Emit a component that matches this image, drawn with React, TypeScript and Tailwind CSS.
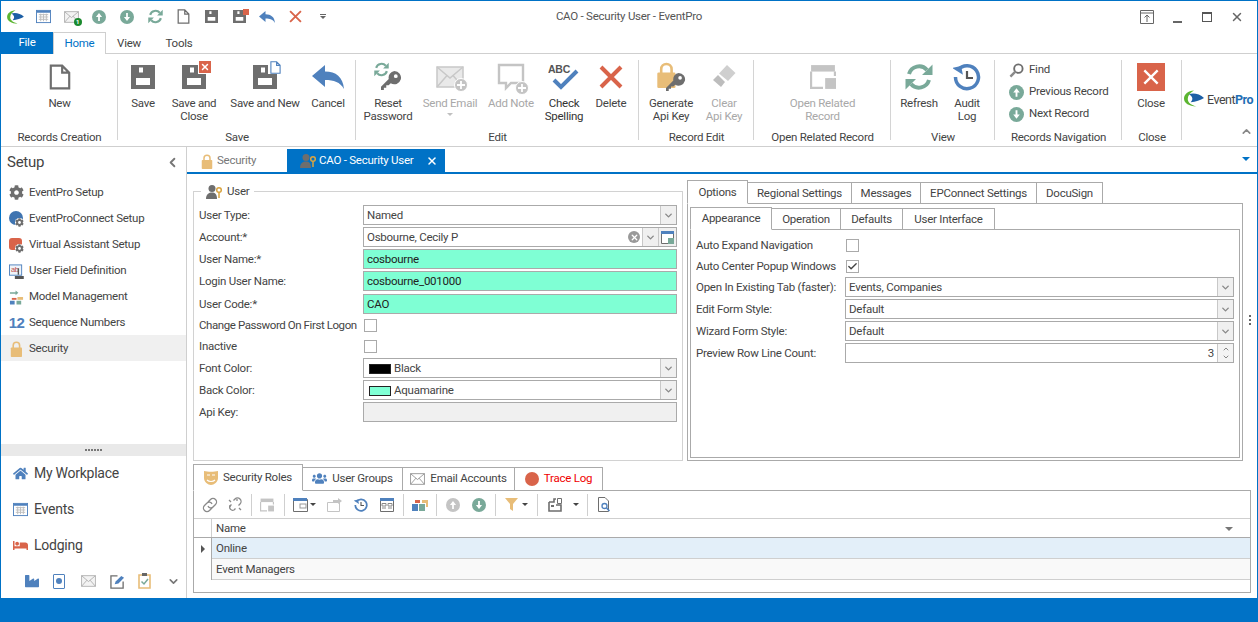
import type { ReactNode } from "react";
import { ChevronDown, ChevronLeft, ChevronUp, Check, X } from "lucide-react";
import { FaBed, FaCog, FaHome, FaIndustry, FaUsers } from "react-icons/fa";

const GRAY = "#6e6e6e";
const BLUE = "#4f81bd";
const RED = "#d9644a";
const GREEN = "#79a999";
const ORANGE = "#e8bd78";
const OFF = "#c4c4c4";

function Doc({ s = 24, c = GRAY }: { s?: number; c?: string }) {
  return (
    <svg width={s} height={s} viewBox="0 0 24 24">
      <path d="M3.500 1.500H14L20.500 8V22.500H3.500Z M14 1.500V8H20.500" fill="none" stroke={c} strokeWidth="2" />
    </svg>
  );
}

function Floppy({ s = 24, c = GRAY, badge }: { s?: number; c?: string; badge?: ReactNode }) {
  return (
    <span className="relative inline-flex">
      <svg width={s} height={s} viewBox="0 0 24 24">
        <path fillRule="evenodd" d="M0 0H24V24H0Z M8 2.500H12V7.500H8Z M5 13H19V20H5Z" fill={c} />
      </svg>
      {badge}
    </span>
  );
}

function Reply({ s = 32, c = BLUE }: { s?: number; c?: string }) {
  return (
    <svg width={s} height={s * 0.75} viewBox="0 0 32 24">
      <path d="M0 11L13 0V6.500C24 6.500 31 12 32 24C28 17 22 15 13 15V22Z" fill={c} />
    </svg>
  );
}

function XMark({ s = 24, c = RED, w = 4 }: { s?: number; c?: string; w?: number }) {
  return (
    <svg width={s} height={s} viewBox="0 0 24 24">
      <path d="M2 2L22 22M22 2L2 22" stroke={c} strokeWidth={w} />
    </svg>
  );
}

function Key({ s = 22, c = GRAY }: { s?: number; c?: string }) {
  return (
    <svg width={s} height={s} viewBox="0 0 22 22">
      <path
        fillRule="evenodd"
        d="M14 1a7 7 0 1 1-3.800 12.900L8 16H5.500v2.500H3V21H0v-3.500L8.100 9.400A7 7 0 0 1 14 1Z M15.500 4.500a2 2 0 1 0 0 4 2 2 0 0 0 0-4Z"
        fill={c}
      />
    </svg>
  );
}

function Refresh({ s = 28, c = GREEN }: { s?: number; c?: string }) {
  return (
    <svg width={s} height={s} viewBox="0 0 28 28">
      <path d="M4 11A10.500 10.500 0 0 1 22 7" fill="none" stroke={c} strokeWidth="4" />
      <path d="M24 17A10.500 10.500 0 0 1 6 21" fill="none" stroke={c} strokeWidth="4" />
      <path d="M27.500 1.500V12H17Z M0.500 26.500V16H11Z" fill={c} />
    </svg>
  );
}

function CircleArrow({ s = 16, c = GREEN, down }: { s?: number; c?: string; down?: boolean }) {
  return (
    <svg width={s} height={s} viewBox="0 0 16 16">
      <circle cx="8" cy="8" r="8" fill={c} />
      <path d={down ? "M7 3.500H9V8H11.500L8 12.500L4.500 8H7Z" : "M7 12.500H9V8H11.500L8 3.500L4.500 8H7Z"} fill="#fff" />
    </svg>
  );
}

function Envelope({ w = 28, h = 22, c = "#a8a8a8", fill = "#f3f3f3" }: { w?: number; h?: number; c?: string; fill?: string }) {
  return (
    <svg width={w} height={h} viewBox="0 0 28 22">
      <path d="M1 1H27V21H1Z" fill={fill} stroke={c} strokeWidth="1.500" />
      <path d="M1 1L14 12L27 1M1 21L11 9.500M27 21L17 9.500" fill="none" stroke={c} strokeWidth="1.500" />
    </svg>
  );
}

function PlusDot({ c = OFF }: { c?: string }) {
  return (
    <svg width="14" height="14" viewBox="0 0 14 14" className="absolute -right-1 -bottom-1">
      <circle cx="7" cy="7" r="6.500" fill={c} stroke="#fff" />
      <path d="M7 3V11M3 7H11" stroke="#fff" strokeWidth="1.800" />
    </svg>
  );
}

function Lock({ s = 18, c = ORANGE }: { s?: number; c?: string }) {
  return (
    <svg width={s * 0.8} height={s} viewBox="0 0 16 20">
      <path d="M4 9V5.500a4 4 0 0 1 8 0V9" fill="none" stroke={c} strokeWidth="2" />
      <rect x="1" y="8" width="14" height="12" rx="1" fill={c} />
    </svg>
  );
}

function WindowIcon({ s = 24, c = OFF }: { s?: number; c?: string }) {
  return (
    <svg width={s} height={s} viewBox="0 0 24 24">
      <path d="M1 1H23V7H1Z" fill={c} />
      <path d="M1 7V22H12M23 7V11" fill="none" stroke={c} strokeWidth="2" />
      <rect x="14" y="13" width="10" height="10" fill={c} />
    </svg>
  );
}

function HistoryClock({ s = 28 }: { s?: number }) {
  return (
    <svg width={s} height={s} viewBox="0 0 28 28">
      <path d="M5 7A11.500 11.500 0 1 1 2.500 14" fill="none" stroke={BLUE} strokeWidth="3.500" />
      <path d="M0 4H9V13Z" fill={BLUE} transform="rotate(-12 4 8)" />
      <path d="M14 8V15H20" fill="none" stroke="#555" strokeWidth="2.200" />
    </svg>
  );
}

function CalendarIcon({ s = 16 }: { s?: number }) {
  return (
    <svg width={s} height={s} viewBox="0 0 16 16">
      <rect x="0.500" y="1.500" width="15" height="13" fill="#fff" stroke={BLUE} />
      <path d="M1 2H15V4H1Z" fill={BLUE} />
      <path d="M3 6H13M3 8.500H13M3 11H13M5 5V13M8 5V13M11 5V13" stroke="#bdbdbd" />
    </svg>
  );
}

function Logo({ w = 16, h = 16 }: { w?: number; h?: number }) {
  return (
    <svg width={w} height={h} viewBox="0 0 24 20">
      <path d="M12 0.500C5 1 0 5 0 10C0 15.500 6 19.500 15 19.500C9 18 4.500 15 4.500 10.500C4.500 6.500 7.500 3 12 0.500Z" fill="#5cb531" />
      <path d="M6 5C11 3 19 4.500 24 9.500C20 12 14 14 8 14.500C11 11.500 11 8 6 5Z" fill="#1c5fa5" />
    </svg>
  );
}

function QuickBtn({ children }: { children: ReactNode }) {
  return <div className="flex h-5 w-7 items-center justify-center">{children}</div>;
}

function RibbonBtn({
  w,
  icon,
  label,
  off,
  caret,
}: {
  w: string;
  icon: ReactNode;
  label: ReactNode;
  off?: boolean;
  caret?: boolean;
}) {
  return (
    <div className={`flex shrink-0 flex-col items-center ${w}`}>
      <div className="flex h-[34px] w-full items-center justify-center">{icon}</div>
      <div className={`mt-[3px] text-center leading-[13px] ${off ? "text-[#a8a8a8]" : ""}`}>{label}</div>
      {caret && <div className="mt-[3px] h-0 w-0 border-x-[3px] border-t-[3px] border-x-transparent border-t-[#c0c0c0]" />}
    </div>
  );
}

function RibbonGroup({
  title,
  w,
  inner = "justify-center",
  children,
  last,
}: {
  title: string;
  w: string;
  inner?: string;
  children?: ReactNode;
  last?: boolean;
}) {
  return (
    <div className={`relative flex h-full shrink-0 flex-col ${w} ${last ? "" : "after:absolute after:top-[6px] after:right-0 after:h-[80px] after:w-px after:bg-[#d4d4d4]"}`}>
      <div className={`flex h-[75px] pt-[6px] ${inner}`}>{children}</div>
      <div className="mt-[1px] text-center leading-[14px]">{title}</div>
    </div>
  );
}

function Ribbon() {
  return (
    <div className="flex h-[93px] shrink-0 border-b border-[#cfcfcf]">
      <RibbonGroup title="Records Creation" w="w-[117px]">
        <RibbonBtn w="w-[60px]" icon={<Doc s={26} />} label="New" />
      </RibbonGroup>
      <RibbonGroup title="Save" w="w-[238px]" inner="justify-start pl-[6px]">
        <RibbonBtn w="w-[38px]" icon={<Floppy />} label="Save" />
        <RibbonBtn
          w="w-[64px]"
          icon={
            <Floppy
              badge={
                <span className="absolute -top-1 -right-[5px] flex size-3 items-center justify-center bg-[#d9644a] ring-1 ring-white">
                  <X size={10} color="#fff" strokeWidth={3.5} />
                </span>
              }
            />
          }
          label={<>Save and<br />Close</>}
        />
        <RibbonBtn
          w="w-[78px]"
          icon={
            <Floppy
              badge={
                <span className="absolute -top-1 -right-[5px] bg-white pl-px">
                  <Doc s={13} c={BLUE} />
                </span>
              }
            />
          }
          label="Save and New"
        />
        <RibbonBtn w="w-[48px]" icon={<Reply />} label="Cancel" />
      </RibbonGroup>
      <RibbonGroup title="Edit" w="w-[283px]" inner="justify-start pl-[1px]">
        <RibbonBtn
          w="w-[62px]"
          icon={
            <span className="relative flex h-7 w-7 items-end justify-end">
              <span className="absolute -top-[1px] left-0"><Refresh s={15} /></span>
              <Key s={21} />
            </span>
          }
          label={<>Reset<br />Password</>}
        />
        <RibbonBtn
          w="w-[62px]"
          off
          caret
          icon={
            <span className="relative inline-flex">
              <Envelope c="#c8c8c8" fill="#e9e9e9" />
              <PlusDot />
            </span>
          }
          label="Send Email"
        />
        <RibbonBtn
          w="w-[60px]"
          off
          icon={
            <span className="relative inline-flex">
              <svg width="28" height="28" viewBox="0 0 28 28">
                <path d="M2 2H26V20H14L9 25V20H2Z" fill="none" stroke={OFF} strokeWidth="2.400" />
              </svg>
              <PlusDot />
            </span>
          }
          label="Add Note"
        />
        <RibbonBtn
          w="w-[46px]"
          icon={
            <svg width="32" height="28" viewBox="0 0 32 28">
              <text x="0" y="10" fontFamily="'Liberation Sans',sans-serif" fontWeight="700" fontSize="10.500" fill="#555">ABC</text>
              <path d="M6 17L13 24L29 8" fill="none" stroke={BLUE} strokeWidth="4" />
            </svg>
          }
          label={<span className="text-[#333]">Check<br />Spelling</span>}
        />
        <RibbonBtn w="w-[48px]" icon={<XMark />} label="Delete" />
      </RibbonGroup>
      <RibbonGroup title="Record Edit" w="w-[115px]" inner="justify-start pl-[1px]">
        <RibbonBtn
          w="w-[62px]"
          icon={
            <span className="relative flex h-[30px] w-[30px]">
              <Lock s={26} />
              <span className="absolute right-0 bottom-0"><Key s={20} /></span>
            </span>
          }
          label={<>Generate<br />Api Key</>}
        />
        <RibbonBtn
          w="w-[44px]"
          off
          icon={
            <svg width="24" height="26" viewBox="0 0 24 26">
              <path d="M15 1L23.500 9L16 17L7 9.500Z" fill="#cfcfcf" />
              <path d="M6 11L13 18L9 23L1 16Z" fill="#bdbdbd" />
            </svg>
          }
          label={<>Clear<br />Api Key</>}
        />
      </RibbonGroup>
      <RibbonGroup title="Open Related Record" w="w-[137px]">
        <RibbonBtn w="w-[100px]" off icon={<WindowIcon s={26} />} label={<>Open Related<br />Record</>} />
      </RibbonGroup>
      <RibbonGroup title="View" w="w-[104px]" inner="justify-start pl-[2px]">
        <RibbonBtn w="w-[52px]" icon={<Refresh />} label="Refresh" />
        <RibbonBtn w="w-[44px]" icon={<HistoryClock />} label={<>Audit<br />Log</>} />
      </RibbonGroup>
      <RibbonGroup title="Records Navigation" w="w-[127px]">
        <div className="flex w-full flex-col gap-[6px] pt-[2px] pl-[14px]">
          <div className="flex h-4 items-center gap-[5px]">
            <svg width="15" height="15" viewBox="0 0 16 16">
              <circle cx="10" cy="6" r="4.500" fill="none" stroke={GRAY} strokeWidth="2" />
              <path d="M7 9L1.500 14.500" stroke="#8a8a8a" strokeWidth="2.600" />
            </svg>
            Find
          </div>
          <div className="flex h-4 items-center gap-[5px]"><CircleArrow s={15} />Previous Record</div>
          <div className="flex h-4 items-center gap-[5px]"><CircleArrow s={15} down />Next Record</div>
        </div>
      </RibbonGroup>
      <RibbonGroup title="Close" w="w-[60px]" inner="justify-center pr-[2px]">
        <RibbonBtn
          w="w-[56px]"
          icon={
            <span className="flex size-7 items-center justify-center bg-[#d9644a]">
              <XMark s={16} c="#fff" w={3.5} />
            </span>
          }
          label="Close"
        />
      </RibbonGroup>
      <RibbonGroup title="" w="w-[75px]" inner="justify-start pl-[2px]" last>
        <div className="flex h-[47px] items-end gap-[3px]">
          <Logo w={20} h={17} />
          <span className="text-[12.500px] leading-[15px] tracking-[-0.5px] text-[#444]">
            Event<span className="font-bold text-[#1f6fb5]">Pro</span>
          </span>
        </div>
        <ChevronUp size={13} strokeWidth={3} className="absolute right-[4px] bottom-[8px] text-[#888]" />
      </RibbonGroup>
    </div>
  );
}

const SETUP: [string, ReactNode][] = [
  ["EventPro Setup", <FaCog size={15} color={GRAY} />],
  [
    "EventProConnect Setup",
    <span className="relative flex size-4">
      <span className="size-[14px] rounded-full bg-[#3f74b0]" />
      <FaCog size={9} color={GRAY} className="absolute right-0 bottom-0 rounded-full bg-white" />
    </span>,
  ],
  [
    "Virtual Assistant Setup",
    <span className="relative flex size-4">
      <span className="mt-px h-3 w-[13px] rounded-[3px] bg-[#d9644a]" />
      <FaCog size={9} color={GRAY} className="absolute right-0 bottom-0 rounded-full bg-white" />
    </span>,
  ],
  [
    "User Field Definition",
    <svg width="16" height="16" viewBox="0 0 16 16">
      <rect x="0.500" y="1.500" width="13" height="11" fill="#eef3f9" stroke={BLUE} />
      <text x="2" y="9.500" fontSize="8" fontFamily="'Liberation Sans',sans-serif" fill="#c0504d">ab</text>
      <path d="M10 5V12M7 14H15V16H7Z" stroke="#555" fill="#555" strokeWidth="1.500" />
    </svg>,
  ],
  [
    "Model Management",
    <svg width="16" height="16" viewBox="0 0 16 16">
      <path d="M1 3H7V1L10 3.500L7 6V4.500H1Z" fill={GREEN} />
      <path d="M9 8H15V11H9Z" fill={ORANGE} />
      <path d="M3 9H8V11H3Z" fill={RED} />
      <path d="M1 12H6V16H1Z" fill={BLUE} />
      <path d="M8 12H13V16H8Z" fill={GREEN} />
    </svg>,
  ],
  ["Sequence Numbers", <span className="[font-family:'Liberation_Sans',sans-serif] text-[15px] leading-none font-bold tracking-[-0.5px] text-[#4f81bd]">12</span>],
  ["Security", <Lock s={16} />],
];

function Sidebar() {
  return (
    <aside className="flex w-[186px] shrink-0 flex-col border-r border-[#cfcfcf]">
      <div className="flex h-[32px] shrink-0 items-center justify-between px-[6px] pb-px">
        <span className="text-[15px]">Setup</span>
        <ChevronLeft size={15} strokeWidth={3} className="text-[#777]" />
      </div>
      <div className="flex flex-1 flex-col">
        {SETUP.map(([label, icon], i) => (
          <div key={label} className={`flex h-[26px] items-center gap-[5px] pt-px pl-[8px] ${i === 6 ? "bg-[#f0f0f0]" : ""}`}>
            <span className="flex w-[15px] justify-center">{icon}</span>
            {label}
          </div>
        ))}
      </div>
      <div className="flex h-[12px] shrink-0 items-center justify-center gap-[1px] bg-[#e9e9e9]">
        {[0, 1, 2, 3, 4, 5].map((n) => (
          <span key={n} className="size-[2px] bg-[#777]" />
        ))}
      </div>
      <div className="flex h-[36px] items-center gap-[6px] pb-px pl-[12px] text-[14px]">
        <FaHome size={15} color={BLUE} />My Workplace
      </div>
      <div className="flex h-[36px] items-center gap-[6px] pb-px pl-[12px] text-[14px]">
        <CalendarIcon s={15} />Events
      </div>
      <div className="flex h-[36px] items-center gap-[6px] pb-px pl-[12px] text-[14px]">
        <FaBed size={15} color={RED} />Lodging
      </div>
      <div className="flex h-[34px] items-center pl-[24px]">
        <span className="flex w-[28px]"><FaIndustry size={14} color={BLUE} /></span>
        <span className="flex w-[28px]">
          <span className="flex h-[15px] w-[12px] items-center justify-center rounded-[1px] border border-[#4f81bd]">
            <span className="size-[6px] rounded-full bg-[#4f81bd]" />
          </span>
        </span>
        <span className="flex w-[29px]"><Envelope w={15} h={12} /></span>
        <span className="flex w-[28px]">
          <svg width="15" height="15" viewBox="0 0 16 16">
            <path d="M8 2H1V15H14V8" fill="none" stroke={GRAY} strokeWidth="1.400" />
            <path d="M5 11L6 8L12 2L15 4L9 10Z" fill={BLUE} />
          </svg>
        </span>
        <span className="flex w-[29px]">
          <svg width="13" height="16" viewBox="0 0 13 16">
            <path d="M1 2H12V15H1Z" fill="#fff" stroke={ORANGE} strokeWidth="1.600" />
            <rect x="4" y="0" width="5" height="3" fill="#666" />
            <path d="M3.500 8.500L6 11L10 6" fill="none" stroke={GREEN} strokeWidth="1.500" />
          </svg>
        </span>
        <ChevronDown size={13} strokeWidth={3} className="text-[#777]" />
      </div>
    </aside>
  );
}

function Tab({ cls, active, children }: { cls: string; active?: boolean; children: ReactNode }) {
  return (
    <div className={`-mb-px flex shrink-0 items-center justify-center gap-[5px] border border-[#aaaaaa] bg-white ${cls} ${active ? "z-10 border-b-white" : "border-l-0"}`}>
      {children}
    </div>
  );
}

function Caret() {
  return (
    <span className="flex h-full w-[16px] items-center justify-center border-l border-[#c8c8c8] bg-[#f0f0f0]">
      <ChevronDown size={11} strokeWidth={3} className="text-[#888]" />
    </span>
  );
}

function Select({ children }: { children: ReactNode }) {
  return (
    <div className="flex h-5 items-center border border-[#aaaaaa] bg-white">
      <div className="flex min-w-0 flex-1 items-center gap-[3px] pt-px pl-[3px]">{children}</div>
      <Caret />
    </div>
  );
}

function TextBox({ children }: { children: ReactNode }) {
  return <div className="flex h-5 items-center border border-[#aaaaaa] bg-[#7fffd4] pt-px pl-[3px] text-[#222]">{children}</div>;
}

function Box({ checked }: { checked?: boolean }) {
  return (
    <span className="flex size-[13px] items-center justify-center border border-[#aaaaaa] bg-white">
      {checked && <Check size={11} strokeWidth={3} className="text-[#444]" />}
    </span>
  );
}

function Row({ label, children, cls = "h-5 mb-[2px]", col }: { label: ReactNode; children: ReactNode; cls?: string; col: string }) {
  return (
    <div className={`flex items-center ${cls}`}>
      <div className={`shrink-0 whitespace-nowrap pt-px ${col}`}>{label}</div>
      <div className="min-w-0 flex-1">{children}</div>
    </div>
  );
}

function UserKey() {
  return (
    <svg width="17" height="14" viewBox="0 0 17 14">
      <circle cx="6" cy="3.500" r="3.500" fill={GRAY} />
      <path d="M0 14C0 9 3 7.500 6 7.500C9 7.500 11 9 11 14Z" fill={GRAY} />
      <circle cx="13" cy="5" r="2.300" fill="none" stroke="#d9a441" strokeWidth="1.500" />
      <path d="M13 7V13" stroke="#d9a441" strokeWidth="1.500" />
    </svg>
  );
}

const LEFT = "w-[164px]";
const RIGHT = "w-[149px]";

function UserForm() {
  return (
    <div className="flex w-[496px] shrink-0 flex-col pt-[17px] pl-[6px]">
      <div className="relative flex-1 border border-[#d2d2d2] px-[5px] pt-[13px]">
        <div className="absolute -top-[9px] left-[7px] flex items-center gap-[4px] bg-white px-[5px]">
          <UserKey />User
        </div>
        <Row col={LEFT} label="User Type:">
          <Select>Named</Select>
        </Row>
        <Row col={LEFT} label="Account:*">
          <div className="flex h-5 items-center border border-[#aaaaaa] bg-white">
            <div className="flex-1 pt-px pl-[3px]">Osbourne, Cecily P</div>
            <span className="mr-[2px] flex size-3 items-center justify-center rounded-full bg-[#999]">
              <X size={9} color="#fff" strokeWidth={3.5} />
            </span>
            <Caret />
            <span className="flex h-full w-[18px] items-center justify-center border-l border-[#c8c8c8] bg-[#f0f0f0]">
              <svg width="13" height="13" viewBox="0 0 13 13">
                <path d="M0.500 0.500H12.500V12.500H0.500Z" fill="#fff" stroke={GRAY} />
                <path d="M0 0H13V3H0Z" fill={BLUE} />
                <rect x="7" y="7" width="6" height="6" fill={GREEN} />
              </svg>
            </span>
          </div>
        </Row>
        <Row col={LEFT} label="User Name:*">
          <TextBox>cosbourne</TextBox>
        </Row>
        <Row col={LEFT} label="Login User Name:" cls="h-5 mb-[3px]">
          <TextBox>cosbourne_001000</TextBox>
        </Row>
        <Row col={LEFT} label="User Code:*">
          <TextBox>CAO</TextBox>
        </Row>
        <Row col={LEFT} label={<span className="tracking-[-0.42px]">Change Password On First Logon</span>} cls="h-[19px] mb-[2px]">
          <span className="block pl-[1px]"><Box /></span>
        </Row>
        <Row col={LEFT} label="Inactive" cls="h-[19px] mb-[2px]">
          <span className="block pl-[1px]"><Box /></span>
        </Row>
        <Row col={LEFT} label="Font Color:">
          <Select>
            <span className="ml-[2px] h-[10px] w-[22px] border border-[#222] bg-black" />Black
          </Select>
        </Row>
        <Row col={LEFT} label="Back Color:">
          <Select>
            <span className="ml-[2px] h-[10px] w-[22px] border border-[#222] bg-[#7fffd4]" />Aquamarine
          </Select>
        </Row>
        <Row col={LEFT} label="Api Key:">
          <div className="h-5 border border-[#aaaaaa] bg-[#f0f0f0]" />
        </Row>
      </div>
    </div>
  );
}

function OptionsPanel() {
  return (
    <div className="flex w-[560px] shrink-0 flex-col pt-[6px] pl-[4px]">
      <div className="flex items-end">
        <Tab cls="w-[61px] h-[24px] pt-px" active>Options</Tab>
        <Tab cls="w-[104px] h-[22px] pt-px">Regional Settings</Tab>
        <Tab cls="w-[69px] h-[22px] pt-px">Messages</Tab>
        <Tab cls="w-[116px] h-[22px] pt-px">EPConnect Settings</Tab>
        <Tab cls="w-[66px] h-[22px] pt-px">DocuSign</Tab>
      </div>
      <div className="flex flex-1 flex-col border border-[#aaaaaa] px-[2px] pt-[3px] pb-[2px]">
        <div className="flex items-end">
          <Tab cls="w-[82px] h-[23px] pt-px" active>Appearance</Tab>
          <Tab cls="w-[69px] h-[22px] pt-px">Operation</Tab>
          <Tab cls="w-[62px] h-[22px] pt-px">Defaults</Tab>
          <Tab cls="w-[92px] h-[22px] pt-px">User Interface</Tab>
        </div>
        <div className="flex-1 border border-[#aaaaaa] px-[5px] pt-[6px]">
          <Row col={RIGHT} label="Auto Expand Navigation" cls="h-[19px] mb-[2px]">
            <span className="block pl-[1px]"><Box /></span>
          </Row>
          <Row col={RIGHT} label="Auto Center Popup Windows" cls="h-[19px] mb-[1px]">
            <span className="block pl-[1px]"><Box checked /></span>
          </Row>
          <Row col={RIGHT} label="Open In Existing Tab (faster):">
            <Select>Events, Companies</Select>
          </Row>
          <Row col={RIGHT} label="Edit Form Style:">
            <Select>Default</Select>
          </Row>
          <Row col={RIGHT} label="Wizard Form Style:">
            <Select>Default</Select>
          </Row>
          <Row col={RIGHT} label="Preview Row Line Count:">
            <div className="flex h-5 items-center justify-end border border-[#aaaaaa] bg-white">
              <span className="pt-px pr-[3px]">3</span>
              <span className="flex h-full w-[16px] flex-col items-center justify-center border-l border-[#c8c8c8] bg-[#f4f4f4] text-[#888]">
                <ChevronUp size={8} strokeWidth={3} />
                <ChevronDown size={8} strokeWidth={3} />
              </span>
            </div>
          </Row>
        </div>
      </div>
    </div>
  );
}

function Sep({ ml }: { ml: string }) {
  return <span className={`h-[22px] w-px shrink-0 bg-[#cfcfcf] ${ml}`} />;
}

function Arrow({ ml }: { ml: string }) {
  return <span className={`h-0 w-0 shrink-0 border-x-[3px] border-t-[3px] border-x-transparent border-t-[#444] ${ml}`} />;
}

function Link({ broken }: { broken?: boolean }) {
  return (
    <svg width="16" height="16" viewBox="0 0 16 16">
      <g fill="none" stroke="#8a8a8a" strokeWidth="1.300">
        {broken ? (
          <path d="M6.500 3.500L8 2a3 3 0 0 1 5 5L11.500 8.500M4.500 7.500L3 9a3 3 0 0 0 4 4L8.500 11.500M2 3L4 5M12 11L14 13M10 2V4M2 9H4" />
        ) : (
          <path d="M6 5L8.500 2.500a3 3 0 0 1 5 5L11 10a3 3 0 0 1-5-1M10 11L7.500 13.500a3 3 0 0 1-5-5L5 6a3 3 0 0 1 5 1" />
        )}
      </g>
    </svg>
  );
}

function Toolbar() {
  return (
    <div className="flex h-[28px] items-center border-b border-[#cfcfcf]">
      <span className="ml-[8px] flex"><Link /></span>
      <span className="ml-[9px] flex"><Link broken /></span>
      <Sep ml="ml-[8px]" />
      <span className="ml-[8px] flex"><WindowIcon s={14} /></span>
      <Sep ml="ml-[10px]" />
      <span className="ml-[8px] flex">
        <svg width="15" height="14" viewBox="0 0 15 14">
          <path d="M0.500 1.500H14.500V13.500H0.500Z" fill="#fff" stroke={GRAY} />
          <path d="M0 0H14V3H0Z" fill={BLUE} />
          <rect x="7" y="6" width="6" height="4" fill="none" stroke="#999" />
        </svg>
      </span>
      <Arrow ml="ml-[2px]" />
      <span className="ml-[11px] flex">
        <svg width="15" height="14" viewBox="0 0 15 14">
          <path d="M0.500 4.500H12.500V13.500H0.500Z" fill="#fff" stroke={OFF} />
          <path d="M6 5V2H11V0L15 3L11 6V4" fill={OFF} />
        </svg>
      </span>
      <span className="ml-[12px] flex"><HistoryClock s={14} /></span>
      <span className="ml-[12px] flex">
        <svg width="14" height="14" viewBox="0 0 14 14">
          <path d="M0.500 0.500H13.500V13.500H0.500Z" fill="#fff" stroke={GRAY} />
          <path d="M0 0H14V3H0Z" fill={BLUE} />
          <path d="M2 5.500H6V8H2ZM8 5.500H12V8H8ZM2 10H6M8 10H12" fill="none" stroke="#888" />
        </svg>
      </span>
      <Sep ml="ml-[9px]" />
      <span className="ml-[8px] flex">
        <svg width="16" height="12" viewBox="0 0 16 12">
          <path d="M3 1H8V4H3Z" fill={RED} />
          <path d="M10 1H16V8H14V4H10Z" fill={ORANGE} />
          <path d="M0 5H6V12H0Z" fill={BLUE} />
          <path d="M7 5H13V12H7Z" fill={GREEN} />
        </svg>
      </span>
      <Sep ml="ml-[8px]" />
      <span className="ml-[9px] flex"><CircleArrow s={14} c={OFF} /></span>
      <span className="ml-[12px] flex"><CircleArrow s={14} down /></span>
      <Sep ml="ml-[9px]" />
      <span className="ml-[9px] flex">
        <svg width="13" height="13" viewBox="0 0 13 13">
          <path d="M0 0H13L8 6V13L5 11V6Z" fill={ORANGE} />
        </svg>
      </span>
      <Arrow ml="ml-[4px]" />
      <Sep ml="ml-[9px]" />
      <span className="ml-[10px] flex">
        <svg width="14" height="14" viewBox="0 0 14 14">
          <path d="M1 4H6V1H8M1 4V13H13V7H8" fill="none" stroke={GRAY} strokeWidth="1.600" />
          <path d="M9.500 0.500H13.500V5.500H9.500Z" fill="#fff" stroke={GRAY} />
          <path d="M3 7H6V9H3Z" fill={GRAY} />
        </svg>
      </span>
      <Arrow ml="ml-[11px]" />
      <Sep ml="ml-[8px]" />
      <span className="ml-[9px] flex">
        <svg width="14" height="15" viewBox="0 0 14 15">
          <path d="M1.500 0.500H8L11.500 4V14.500H1.500Z" fill="#fff" stroke={GRAY} />
          <circle cx="7.500" cy="9" r="2.500" fill="none" stroke={BLUE} strokeWidth="1.300" />
          <path d="M9.500 11L12.500 14" stroke={BLUE} strokeWidth="1.500" />
        </svg>
      </span>
    </div>
  );
}

function BottomPanel() {
  return (
    <div className="flex flex-col px-[6px] pt-[3px] pb-[5px]">
      <div className="flex items-end">
        <Tab cls="w-[110px] h-[27px]" active>
          <svg width="14" height="15" viewBox="0 0 14 15">
            <path d="M0 1C4 2 10 2 14 1V8C14 12 10 15 7 15C4 15 0 12 0 8Z" fill={ORANGE} />
            <path d="M3 10C5 12 9 12 11 10M3 5H6M8 5H11" fill="none" stroke="#fff" strokeWidth="1.200" />
          </svg>
          Security Roles
        </Tab>
        <Tab cls="w-[100px] h-[24px] pb-px"><FaUsers size={15} color={BLUE} />User Groups</Tab>
        <Tab cls="w-[112px] h-[24px] pb-px"><Envelope w={15} h={12} c="#888" fill="#fff" />Email Accounts</Tab>
        <Tab cls="w-[88px] h-[24px] pb-px"><span className="size-[14px] rounded-full bg-[#d9644a]" /><span className="text-[#f00000]">Trace Log</span></Tab>
      </div>
      <div className="h-[103px] border border-[#aaaaaa]">
        <Toolbar />
        <div className="flex h-[19px] border-b border-[#aaaaaa]">
          <div className="w-[18px] border-r border-[#cfcfcf]" />
          <div className="flex flex-1 items-center justify-between pt-px pr-[17px] pl-[4px]">
            Name
            <span className="h-0 w-0 border-x-[4px] border-t-[4px] border-x-transparent border-t-[#777]" />
          </div>
        </div>
        <div className="flex h-[21px]">
          <div className="flex w-[18px] items-center justify-center border-r border-[#aaaaaa]">
            <span className="h-0 w-0 border-y-[4px] border-l-[4px] border-y-transparent border-l-[#555]" />
          </div>
          <div className="flex flex-1 items-center border-b border-[#cfcfcf] bg-[#e3eff9] pt-px pl-[4px]">Online</div>
        </div>
        <div className="flex h-[21px]">
          <div className="w-[18px] border-r border-[#aaaaaa]" />
          <div className="flex flex-1 items-center border-b border-[#cfcfcf] bg-[#f9f9f9] pt-px pl-[4px]">Event Managers</div>
        </div>
      </div>
    </div>
  );
}

function Main() {
  return (
    <main className="flex min-w-0 flex-1 flex-col">
      <div className="flex h-[27px] shrink-0 items-end border-b-2 border-[#0072c6] pl-[3px]">
        <div className="flex h-[23px] w-[97px] items-center gap-[4px] pt-px pl-[11px] text-[#777]"><Lock s={15} />Security</div>
        <div className="flex h-[23px] w-[158px] items-center bg-[#0072c6] pl-[13px] text-white">
          <UserKey />
          <span className="ml-[2px] flex-1">CAO - Security User</span>
          <X size={12} strokeWidth={3} className="mr-[7px]" />
        </div>
        <div className="flex-1" />
        <span className="mr-[7px] mb-[11px] h-0 w-0 border-x-[4px] border-t-[4px] border-x-transparent border-t-[#0072c6]" />
      </div>
      <div className="flex h-[287px] shrink-0">
        <UserForm />
        <OptionsPanel />
        <div className="flex flex-1 flex-col items-center justify-center gap-[2px] pt-[4px]">
          <span className="size-[2px] bg-[#666]" />
          <span className="size-[2px] bg-[#666]" />
          <span className="size-[2px] bg-[#666]" />
        </div>
      </div>
      <BottomPanel />
    </main>
  );
}

export default function App() {
  return (
    <div className="flex h-[622px] w-[1258px] flex-col overflow-hidden border-x border-t border-[#0072c6] bg-white [font-family:Roboto,sans-serif] text-[11.5px] tracking-[-0.25px] text-[#444]">
      <div className="grid h-[31px] shrink-0 grid-cols-[1fr_auto_1fr] items-center">
        <div className="flex items-center">
          <QuickBtn><Logo w={17} h={14} /></QuickBtn>
          <QuickBtn><CalendarIcon s={15} /></QuickBtn>
          <QuickBtn>
            <span className="relative inline-flex">
              <Envelope w={15} h={12} />
              <span className="absolute -right-[3px] -bottom-[3px] flex size-[8px] items-center justify-center rounded-full bg-[#1a8a2e] text-[6px] leading-none font-bold text-white">1</span>
            </span>
          </QuickBtn>
          <QuickBtn><CircleArrow s={14} /></QuickBtn>
          <QuickBtn><CircleArrow s={14} down /></QuickBtn>
          <QuickBtn><Refresh s={15} /></QuickBtn>
          <QuickBtn><Doc s={15} /></QuickBtn>
          <QuickBtn><Floppy s={13} /></QuickBtn>
          <QuickBtn>
            <Floppy
              s={13}
              badge={<span className="absolute -top-px -right-[3px] flex size-[6px] items-center justify-center bg-[#d9644a]" />}
            />
          </QuickBtn>
          <QuickBtn><Reply s={16} /></QuickBtn>
          <QuickBtn><XMark s={13} w={3.5} /></QuickBtn>
          <div className="flex w-7 flex-col items-center gap-px">
            <span className="h-px w-[6px] bg-[#666]" />
            <span className="h-0 w-0 border-x-[3px] border-t-[3px] border-x-transparent border-t-[#666]" />
          </div>
        </div>
        <div className="text-[#555]">CAO - Security User - EventPro</div>
        <div className="flex items-center justify-end pr-[5px]">
          <span className="flex w-[30px] justify-center">
            <svg width="14" height="14" viewBox="0 0 14 14">
              <path d="M0.500 0.500H13.500V13.500H0.500ZM0.500 3H13.500M7 12V5M4.500 7.500L7 5L9.500 7.500" fill="none" stroke="#666" />
            </svg>
          </span>
          <span className="flex h-[14px] w-[30px] items-end justify-center pb-[1px]"><span className="h-[2px] w-[9px] bg-[#666]" /></span>
          <span className="flex w-[30px] justify-center"><span className="size-[10px] border border-t-2 border-[#555]" /></span>
          <span className="flex w-[30px] justify-center"><X size={14} strokeWidth={2.5} className="text-[#666]" /></span>
        </div>
      </div>
      <div className="flex h-[22px] shrink-0 items-end border-b border-[#cfcfcf]">
        <div className="-mb-px flex h-[22px] w-[52px] items-center justify-center bg-[#0072c6] text-white">File</div>
        <div className="-mb-px flex h-[22px] w-[53px] items-center justify-center border-x border-t border-[#cfcfcf] bg-white pt-px text-[#0072c6]">Home</div>
        <div className="flex h-[21px] w-[46px] items-center justify-center pt-[2px]">View</div>
        <div className="flex h-[21px] w-[54px] items-center justify-center pt-[2px]">Tools</div>
      </div>
      <Ribbon />
      <div className="flex min-h-0 flex-1">
        <Sidebar />
        <Main />
      </div>
      <div className="h-[24px] shrink-0 bg-[#0072c6]" />
    </div>
  );
}
